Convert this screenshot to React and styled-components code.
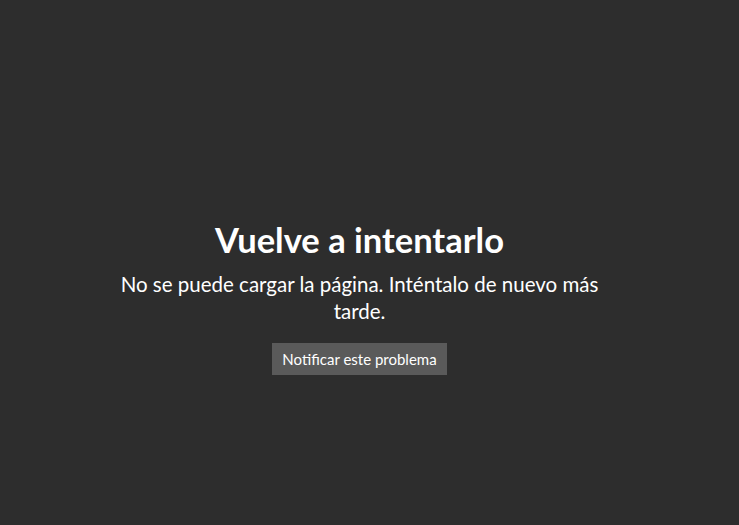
import React from 'react';
import styled, {createGlobalStyle} from 'styled-components';

const GlobalStyle = createGlobalStyle`
  html, body {
    margin: 0;
    padding: 0;
    height: 100%;
    background: #2d2d2d;
  }
  #root {
    height: 100%;
  }
`;

const App = () => {
    return (
        <>
            <GlobalStyle/>
            <Page>
                <Content>
                    <Title>Vuelve a intentarlo</Title>
                    <Message>No se puede cargar la página. Inténtalo de nuevo más tarde.</Message>
                    <ReportButton>Notificar este problema</ReportButton>
                </Content>
            </Page>
        </>
    );
};

export default App;

const Page = styled.div`
  width: 100%;
  height: 100%;
  box-sizing: border-box;
  padding: 217px 20px 0 0;
  display: flex;
  justify-content: center;
  font-family: Lato, "Noto Sans", sans-serif;
  color: #ffffff;
`;

const Content = styled.div`
  width: 500px;
  display: flex;
  flex-direction: column;
  align-items: center;
  text-align: center;
`;

const Title = styled.h1`
  margin: 0 0 8px;
  font-size: 34.5px;
  line-height: 46px;
  font-weight: 700;
`;

const Message = styled.p`
  margin: 0;
  font-size: 20.5px;
  line-height: 27px;
  font-weight: 400;
`;

const ReportButton = styled.button`
  margin-top: 18px;
  height: 32px;
  padding: 0 10px;
  border: none;
  background: #5a5a5a;
  color: #ffffff;
  font-family: inherit;
  font-size: 15px;
  cursor: pointer;
`;
